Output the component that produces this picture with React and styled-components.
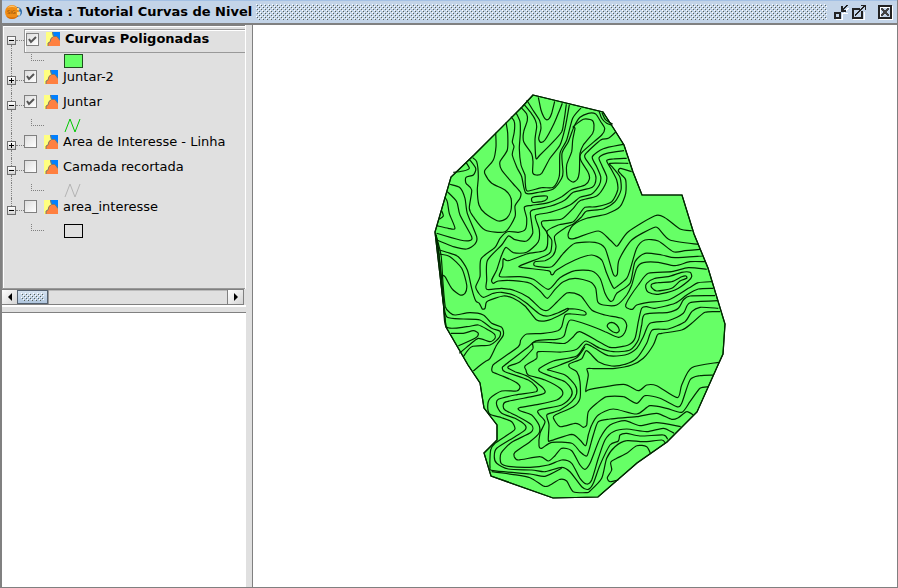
import React, { useState } from "react";
import styled, { createGlobalStyle } from "styled-components";

// Contours were digitised sheet by sheet, three units to a pixel.
// A letter in a line switches to the sheet with that origin.
const SHEETS = { N: [430, 90], D: [575, 215], E: [465, 355], F: [590, 355] };

const OUTLINE =
  "533,95 603,112 614,129 624,145 633,172 642,195 682,195 694,234 708,268 725,324 723,354 718,365 697,412 667,442 637,463 598,497 553,498 491,476 484,453 497,440 497,425 484,408 480,383 468,365 446,327 435,232 451,177 474,155 522,107";

const CONTOURS = [
  "N 325,22 333,60 341,80 349,89 358,85 365,70 374,34",
  "N 290,30 310,62 329,92 333,115 326,145 332,157 345,150 370,105 385,70 397,40",
  "N 282,43 304,70 316,90 320,110 315,150 318,205 330,195 370,155 395,125 400,105 409,43",
  "N 273,52 290,72 292,92 281,125 281,155 305,192 309,215 308,248 318,255 335,250 360,205 390,165 405,115 418,45",
  "N 258,68 270,95 271,130 268,175 273,225 285,255 286,280 292,303 335,293 370,292 388,258 390,190 410,150 428,85 453,54",
  "N 243,80 253,95 253,125 247,155 252,170 247,195 262,235 275,260 288,310 330,306 370,297 395,265 399,245 396,190 415,155 432,110 450,82 475,70 497,72 512,95 524,115 515,135 455,188 452,210 475,248 478,268 465,285 425,298 395,320 355,338 305,346 283,352 290,385 286,418 265,427 232,425 210,445 195,472 153,507 150,560 137,590 145,608 160,622 190,610 215,607 255,617 290,640 330,673 355,678 385,668 413,655 413,661 385,678 350,692 320,690 285,648 250,625 220,618 175,632 168,640 165,655 157,657 148,640 137,632 125,595 112,540 85,500 50,487 28,480",
  "N 558,125 535,145 512,150 470,188 465,203 490,240 498,265 487,292 430,307 405,330 360,349 310,359 301,367 305,400 308,430 290,453 255,449 235,438 215,465 172,512 170,570 170,598 215,595 255,602 295,622 335,658 355,660 380,637 410,609 435,610 455,620 485,660 525,675 575,685 590,705 583,730 565,742 525,725 475,705 422,690 410,710 402,738 380,748 320,752 290,775 225,825 E 112,38 120,50 190,75 213,95 213,110 150,120 100,133 95,150 110,175 150,190 180,210 180,225 150,245 95,280 88,305 95,325 130,342 200,345 240,350 290,337 315,350 350,395 370,403 385,385 F 30,330 60,270 85,258 90,240 110,235 150,243 220,240 233,253",
  "N 580,163 520,176 487,200 500,230 512,260 508,285 485,312 450,322 420,345 360,367 318,375 318,390 328,420 325,455 290,487 250,488 228,472 215,495 200,540 185,570 190,580 205,573 250,572 300,580 330,603 352,625 375,598 400,575 D 0,190 45,200 62,220 68,260 85,270 125,270 155,240 170,210 185,160 205,143 250,142 300,152 345,140 390,140",
  "N 582,182 530,190 507,203 515,225 530,260 525,285 500,318 450,332 430,355 395,387 338,393 337,408 352,430 352,468 340,483 290,492 235,512 220,506 218,530 208,555 215,561 270,560 310,568 355,598 390,563 D 0,167 50,168 75,190 90,235 105,258 115,255 125,235 165,205 180,140 210,115 260,120 300,128 383,123",
  "N 590,205 550,207 530,212 545,240 560,270 563,300 545,335 500,350 465,352 450,370 430,395 385,405 350,425 365,450 362,485 345,498 270,527 280,533 355,542 363,553 370,553 380,540 D 0,135 50,120 80,135 95,175 115,218 125,215 155,190 165,165 185,100 210,75 250,78 295,110 330,107 375,103",
  "N 595,220 540,220 548,232 570,262 573,300 555,335 520,357 470,363 455,380 430,402 408,412 374,438 378,470 370,495 345,512 315,515 315,528 365,530 400,490 D 0,85 60,82 90,100 115,178 127,178 132,135 170,75 235,38 250,40 285,75 370,88",
  "N 605,245 572,235 565,243 575,255 587,270 587,310 570,350 530,372 470,385 430,405 415,430 417,445 D 0,70 70,48 105,75 122,92 130,90 160,50 240,2 270,8 315,42 350,47",
  "D 395,163 340,158 290,170 220,175 190,210 165,245 152,270 155,278 172,283 185,270 220,262 280,255 340,220 370,203 410,200",
  "D 415,220 370,222 335,240 300,265 240,280 215,275 200,280 190,320 180,370 160,390 110,398 80,385 15,350 N 430,740 405,760 365,758 310,757 308,777 270,815 237,828 E 130,40 150,50 190,65 235,100 238,115 200,125 125,140 115,150 120,165 160,185 200,210 198,232 140,262 108,295 108,325 130,334 195,337 250,330 290,315 320,325 345,370 365,387 380,375 400,310 F 45,255 70,230 110,222 170,230 220,220 252,235",
  "D 420,242 345,243 325,255 310,280 280,292 210,298 200,330 190,375 165,405 115,410 75,400 32,378 N 440,778 395,786 325,785 320,805 285,828 E 183,45 190,60 240,75 285,100 293,118 275,135 220,148 163,158 165,167 200,180 222,210 222,235 195,260 150,292 148,305 160,315 225,305 250,318 270,302 290,280 320,287 345,330 360,343 375,325 F 30,250 60,210 105,197 150,212 200,203 272,215",
  "D 428,257 345,263 325,295 280,317 225,325 205,365 185,400 150,420 100,422 60,400 32,388 N 440,798 370,813 329,835 E 225,50 260,65 300,80 320,105 318,125 290,150 222,165 222,178 240,200 225,235 222,272 230,280 260,262 320,265 345,290 365,303 375,275 F 10,240 25,200 60,192 140,185 200,175 245,193 265,188 290,170 310,180",
  "N 465,770 440,803 390,825 355,838 E 252,46 300,60 330,90 335,115 320,140 285,165 247,178 247,190 252,210 250,255 258,257 320,238 345,255 362,272 370,240 F 5,210 25,180 70,162 140,177 180,152 230,160 275,172 300,140 330,100 355,95",
  "D 430,280 375,277 350,290 330,320 280,342 232,345 215,385 185,430 150,448 110,453 70,440 35,407 N 455,806 418,822 420,833 E 335,50 345,80 345,130 325,155 275,178 265,188 285,215 330,205 345,210 355,217 365,210 370,170 395,145 F 50,125 100,125 140,145 165,122 210,130 260,155 275,145 300,75 330,62 372,60",
  "D 435,290 390,292 350,325 320,345 260,355 247,360 235,390 205,430 170,450 120,460 60,461 36,461 E 370,60 362,108 F 0,103 100,88 145,107 170,90 200,92 262,128 275,90 305,38 387,22",
  "N 413,657 435,657 465,665 465,675 425,672 405,675 395,710 383,722 340,730 290,732 272,750 265,770 195,820 E 82,35 82,50 110,62 150,80 165,95 155,108 110,108 75,130 68,155 75,178 110,188 140,200 150,222 135,235 90,265 77,285 75,335 85,347 195,357 240,364 290,340",
  "E 80,350 140,358 195,368 235,393 250,393 285,373 305,378 325,410 365,413 F 0,408 35,370 50,310 75,275 110,257 160,260 215,255 225,263",
  "F 85,375 60,380 52,368 65,345 62,322 80,310 110,295 140,272 170,275 182,297",
  "N 197,128 198,170 190,210 165,240 165,252 185,280 225,300 243,325 243,360 230,385 205,393 165,370 147,345 142,300 145,260 140,215 128,203",
  "N 228,97 233,130 232,180 210,215 215,240 250,282 272,308 270,325 255,348 255,380 225,425 165,420 130,380 118,355 125,300 108,280 108,262 130,255 137,235 118,208",
  "N 108,217 118,235 100,243 70,247",
  "N 60,283 90,293 105,325 112,370 140,440 135,462 110,477 70,470 20,450",
  "N 52,305 80,335 90,375 125,440 118,452 90,450 20,430",
  "N 45,322 52,335 58,370 75,415 55,415 20,407",
  "N 35,362 40,378 28,388",
  "N 28,492 60,500 95,535 110,585 105,610 90,615 65,595 45,560 34,555",
  "N 18,435 33,495 39,580 46,650 60,668 75,675 120,668 160,675 185,700 215,712 220,735 200,765 180,805 165,815 145,830 130,843",
  "N 18,435 26,480 35,590 42,650 52,682 100,687 150,690 185,715 210,724 208,742 180,765 125,770 100,800",
  "N 17,430 30,520 40,620 48,710 110,710 145,705 175,720 193,732 195,745 180,755 145,745 118,765 88,790",
  "N 63,730 100,730 130,722 145,730 135,745 85,768",
  "N 508,65 515,85 530,100 545,105",
  "N 516,68 526,88 548,103",
];

const RINGS = [
  "N 430,110 460,88 485,90 492,105 488,130 460,165 450,190 448,245 442,268 428,276 412,262 410,225 425,185 428,150 435,115",
  "N 305,325 315,320 350,318 350,328 335,335 308,337",
  "N 533,703 545,697 560,705 568,720 562,728 548,725 533,712",
  "D 215,205 240,190 280,185 320,172 345,172 350,185 340,198 300,225 250,238 220,232 212,218",
  "D 230,208 250,203 290,200 320,185 333,183 335,190 315,198 290,220 245,228 230,218",
];

const readPoints = (line) => {
  let origin = [0, 0];
  const pts = [];
  line.split(" ").forEach((word) => {
    if (SHEETS[word]) {
      origin = SHEETS[word];
      return;
    }
    const [x, y] = word.split(",").map(Number);
    pts.push([origin[0] + x / 3, origin[1] + y / 3]);
  });
  return pts;
};

// Catmull-Rom spline through the points
const toPath = (line, closed) => {
  const p = readPoints(line);
  const n = p.length;
  const at = (i) =>
    closed ? p[(i + n) % n] : p[Math.max(0, Math.min(n - 1, i))];
  let d = `M${p[0].map((v) => v.toFixed(1))}`;
  for (let i = 0; i < (closed ? n : n - 1); i++) {
    const [a, b, c, e] = [at(i - 1), at(i), at(i + 1), at(i + 2)];
    const c1 = [0, 1].map((k) => (b[k] + (c[k] - a[k]) / 8).toFixed(1));
    const c2 = [0, 1].map((k) => (c[k] - (e[k] - b[k]) / 8).toFixed(1));
    d += `C${c1} ${c2} ${c.map((v) => v.toFixed(1))}`;
  }
  return d;
};

const LAYERS = [
  { name: "Curvas Poligonadas", on: true, open: true, symbol: "fill", active: true },
  { name: "Juntar-2", on: true, open: false },
  { name: "Juntar", on: true, open: true, symbol: "line", color: "#00c800" },
  { name: "Area de Interesse - Linha", on: false, open: false },
  { name: "Camada recortada", on: false, open: true, symbol: "line", color: "#b4b4b4" },
  { name: "area_interesse", on: false, open: true, symbol: "box" },
];

const Bumps = ({ id }) => (
  <BumpArea aria-hidden="true" shapeRendering="crispEdges">
    <defs>
      <pattern id={id} width="4" height="4" patternUnits="userSpaceOnUse">
        <path d="M0 0h1v1h-1zM2 2h1v1h-1z" fill="#fff" />
        <path d="M1 1h1v1h-1zM3 3h1v1h-1z" fill="#566058" />
      </pattern>
    </defs>
    <rect width="100%" height="100%" fill={`url(#${id})`} />
  </BumpArea>
);

const AppIcon = () => (
  <svg width="17" height="17" viewBox="0 0 17 17" aria-hidden="true">
    <circle cx="12" cy="8" r="5" fill="#2c6aa8" />
    <path d="M13 3l2 2-1 2 2 1-1 4-2 1z" fill="#8ab6dc" />
    <circle cx="7" cy="8" r="7" fill="#ef8d16" />
    <path d="M2 4q5-5 10 0q-5-2-10 0z" fill="#ffc267" />
    <path d="M1 12q6 3 12 0q-2 3-6 3t-6-3z" fill="#d46c08" />
    <path d="M12 4h2v2h-2zM12 8h3v3h-3z" fill="#fbd48b" />
    <text x="2" y="10" fontSize="5" fontFamily="DejaVu Sans" fill="#8a4a08">
      SIG
    </text>
  </svg>
);

const LayerIcon = () => (
  <svg width="14" height="14" viewBox="0 0 14 14" aria-hidden="true">
    <path d="M0 0h14v14h-14z" fill="#ffff80" />
    <path d="M6 0h8v9l-4-3-3-2z" fill="#0080ff" />
    <path d="M2 14v-3l2-1 1-4 2-1h4l3 4v5z" fill="#ff8040" />
    <path
      d="M6.500 0l1 4.500h3.500l3 4M7.500 4.500l-2.500 2-1 3.500-2 1v3"
      fill="none"
      stroke="#807868"
    />
  </svg>
);

const Symbol = ({ layer }) => {
  if (layer.symbol === "line") {
    return (
      <svg width="19" height="15" viewBox="0 0 19 15" aria-hidden="true">
        <path d="M1 14L6 1L11 14L16 1" fill="none" stroke={layer.color} />
      </svg>
    );
  }
  return <Swatch $filled={layer.symbol === "fill"} />;
};

const Layer = ({ layer, first, last }) => {
  const [on, setOn] = useState(layer.on);
  const [open, setOpen] = useState(layer.open);
  const hasSymbol = !!layer.symbol;
  return (
    <>
      <Row>
        <Gutter>
          <Trunk $hidden={first} />
          <Handle
            type="button"
            aria-label={`${open ? "Collapse" : "Expand"} ${layer.name}`}
            onClick={() => setOpen(!open)}
          >
            <svg width="7" height="7" viewBox="0 0 7 7" shapeRendering="crispEdges">
              <path d={open ? "M1 3h5v1h-5z" : "M1 3h5v1h-5zM3 1h1v5h-1z"} />
            </svg>
          </Handle>
          <Trunk $hidden={last} />
        </Gutter>
        <Branch />
        <LayerLabel $active={layer.active}>
          <Tick>
            <input
              type="checkbox"
              checked={on}
              onChange={(e) => setOn(e.target.checked)}
            />
            <svg width="9" height="9" viewBox="0 0 9 9" aria-hidden="true">
              <path d="M1 4L3 7L8 2" fill="none" stroke="#555" strokeWidth="2" />
            </svg>
          </Tick>
          <LayerIcon />
          <LayerName $active={layer.active}>{layer.name}</LayerName>
        </LayerLabel>
      </Row>
      {open && hasSymbol && (
        <SymbolRow>
          <Gutter>
            <Trunk $hidden={last} />
          </Gutter>
          <Elbow />
          <Symbol layer={layer} />
        </SymbolRow>
      )}
    </>
  );
};

export default function App() {
  return (
    <Frame>
      <GlobalStyle />
      <TitleBar>
        <AppIcon />
        <Title>Vista : Tutorial Curvas de Nivel</Title>
        <Grip>
          <Bumps id="grip" />
        </Grip>
        <WindowButton type="button" aria-label="Minimize">
          <svg width="15" height="15" viewBox="0 0 15 15" shapeRendering="crispEdges">
            <path d="M2 14.500h6.500v-7M14.500 3l-5 5.500h4" fill="none" stroke="#fff" />
            <path d="M0 7h7v7h-7zM2 9v3h3v-3z" fill="#222" fillRule="evenodd" />
            <path
              d="M7 1h2v2h1v-1h1v-1h1v-1h2v1h-1v1h-1v1h-1v1h-1v1h2v2h-5z"
              fill="#222"
            />
          </svg>
        </WindowButton>
        <WindowButton type="button" aria-label="Maximize">
          <svg width="15" height="15" viewBox="0 0 15 15" shapeRendering="crispEdges">
            <path d="M1 14.500h11v-8" fill="none" stroke="#fff" />
            <path d="M0 3h8v2h-6v7h7v-6h2v8h-11z" fill="#222" />
            <path
              d="M9 0h5v5h-1v-3h-1v1h-1v1h-1v1h-1v1h-1v1h-1v1h-1v1h-1v1h-1v1h-1v-2h1v-1h1v-1h1v-1h1v-1h1v-1h1v-1h1v-1h1v-1h-2z"
              fill="#222"
            />
          </svg>
        </WindowButton>
        <CloseButton type="button" aria-label="Close">
          <svg width="15" height="15" viewBox="0 0 15 15" shapeRendering="crispEdges">
            <path d="M1 14.500h13.500v-13.500M2.500 12v-9.500h10" fill="none" stroke="#fff" />
            <path d="M0 0h14v14h-14zM2 2v10h10v-10z" fill="#222" fillRule="evenodd" />
            <path
              d="M3 3h2v1h1v1h2v-1h1v-1h2v2h-1v1h-1v2h1v1h1v2h-2v-1h-1v-1h-2v1h-1v1h-2v-2h1v-1h1v-2h-1v-1h-1z"
              fill="#444"
            />
          </svg>
        </CloseButton>
      </TitleBar>
      <Panes>
        <SideBar>
          <LayerTree>
            {LAYERS.map((layer, i) => (
              <Layer
                key={layer.name}
                layer={layer}
                first={i === 0}
                last={i === LAYERS.length - 1}
              />
            ))}
          </LayerTree>
          <ScrollBar>
            <ArrowButton type="button" aria-label="Scroll left">
              <svg width="4" height="8" viewBox="0 0 4 8">
                <path d="M4 0v8L0 4z" />
              </svg>
            </ArrowButton>
            <Thumb>
              <Bumps id="thumb" />
            </Thumb>
            <Track />
            <ArrowButton type="button" aria-label="Scroll right">
              <svg width="4" height="8" viewBox="0 0 4 8">
                <path d="M0 0v8L4 4z" />
              </svg>
            </ArrowButton>
          </ScrollBar>
          <Splitter />
          <Locator />
        </SideBar>
        <Divider />
        <MapView>
          <Map viewBox="253 25 644 562" role="img" aria-label="Curvas de nivel">
            <polygon points={OUTLINE} fill="#66ff66" />
            {CONTOURS.map((c) => (
              <path key={c} d={toPath(c, false)} />
            ))}
            {RINGS.map((c) => (
              <path key={c} d={toPath(c, true)} />
            ))}
            <polygon points={OUTLINE} />
          </Map>
        </MapView>
      </Panes>
    </Frame>
  );
}

const GlobalStyle = createGlobalStyle`
  body {
    margin: 0;
  }
  * {
    box-sizing: border-box;
  }
  svg {
    display: block;
    flex: none;
  }
`;

const Frame = styled.div`
  display: flex;
  flex-direction: column;
  min-height: 100vh;
  background: #e0e0e0;
  border-left: 2px solid #808080;
  border-right: 1px solid #808080;
  border-bottom: 1px solid #808080;
  font-family: "DejaVu Sans", sans-serif;
  font-size: 13px;
  color: #000;
`;
const TitleBar = styled.header`
  display: flex;
  align-items: center;
  height: 25px;
  padding: 0 4px 0 3px;
  background: #c3d4e8;
  border-top: 1px solid #a3c0e4;
  border-bottom: 2px solid #808080;
`;
const Title = styled.h1`
  margin: 0 4px;
  font-size: 13px;
  line-height: 16px;
  font-weight: bold;
  white-space: nowrap;
`;
const Grip = styled.div`
  flex: 1;
  height: 16px;
  margin-right: 7px;
`;
const BumpArea = styled.svg`
  width: 100%;
  height: 100%;
`;
const WindowButton = styled.button`
  padding: 0;
  margin-right: 3px;
  border: none;
  background: none;
`;
const CloseButton = styled(WindowButton)`
  margin: 0 0 0 8px;
`;
const Panes = styled.main`
  flex: 1;
  display: grid;
  grid-template-columns: 244px 6px 1fr;
`;
const SideBar = styled.aside`
  display: flex;
  flex-direction: column;
  min-width: 0;
`;
const LayerTree = styled.div`
  height: 264px;
  padding-top: 2px;
  margin-right: 1px;
  border-top: 1px solid #808080;
  border-left: 1px solid #999;
  border-bottom: 1px solid #999;
  box-shadow: inset 1px 1px #fff, 1px 0 #fff;
`;
const Row = styled.div`
  display: flex;
  align-items: center;
  height: 25px;
  padding-left: 4px;
`;
const SymbolRow = styled(Row)`
  height: 15px;
`;
const Gutter = styled.div`
  display: flex;
  flex-direction: column;
  align-items: center;
  align-self: stretch;
  width: 9px;
`;
const Trunk = styled.div`
  flex: 1;
  border-left: 1px dotted #808080;
  visibility: ${(props) => (props.$hidden ? "hidden" : "visible")};
`;
const Handle = styled.button`
  width: 9px;
  height: 9px;
  padding: 0;
  border: 1px solid #707070;
  background: linear-gradient(#fff, #d0d0d0);
`;
const Branch = styled.div`
  width: 8px;
  border-top: 1px dotted #808080;
`;
const Elbow = styled.div`
  align-self: flex-start;
  width: 13px;
  height: 7px;
  margin: 1px 20px 0 15px;
  border-left: 1px dotted #808080;
  border-bottom: 1px dotted #808080;
`;
const LayerLabel = styled.label`
  display: flex;
  align-items: center;
  flex: 1;
  height: ${(props) => (props.$active ? "24px" : "25px")};
  padding: ${(props) => (props.$active ? "0 0 3px 1px" : "0 0 8px 0")};
  border: ${(props) => (props.$active ? "1px solid #999" : "none")};
  border-right: none;
  box-shadow: ${(props) => (props.$active ? "inset 1px 1px #fff" : "none")};
`;
const LayerName = styled.span`
  margin-left: 5px;
  font-weight: ${(props) => (props.$active ? "bold" : "normal")};
  line-height: 16px;
  white-space: nowrap;
`;
const Tick = styled.span`
  display: grid;
  place-items: center;
  margin-right: 7px;
  input {
    grid-area: 1 / 1;
    appearance: none;
    width: 13px;
    height: 13px;
    margin: 0;
    border: 1px solid #808080;
    background: linear-gradient(135deg, #ddd, #fff);
  }
  svg {
    grid-area: 1 / 1;
    visibility: hidden;
    pointer-events: none;
  }
  input:checked + svg {
    visibility: visible;
  }
`;
const Swatch = styled.span`
  width: 19px;
  height: 14px;
  border: 1px solid ${(props) => (props.$filled ? "#1f4d1f" : "#000")};
  background: ${(props) => (props.$filled ? "#66ff66" : "transparent")};
`;
const ScrollBar = styled.div`
  display: flex;
  height: 16px;
  margin-right: 2px;
  border: 1px solid #808080;
  border-left: none;
`;
const ArrowButton = styled.button`
  display: grid;
  place-items: center;
  width: 15px;
  padding: 0;
  border: none;
  background: linear-gradient(135deg, #fff, #d4d4d4);
`;
const Thumb = styled.div`
  width: 31px;
  padding: 2px 3px;
  border: 1px solid #566270;
  background: linear-gradient(#d5e2f0, #b0c6de);
`;
const Track = styled.div`
  flex: 1;
  border-right: 1px solid #808080;
  border-left: 1px solid #999;
  box-shadow: inset 0 1px #bbb;
`;
const Splitter = styled.div`
  height: 8px;
  border-top: 2px solid #fff;
  border-bottom: 1px solid #808080;
`;
const Locator = styled.div`
  flex: 1;
  background: #fff;
`;
const Divider = styled.div`
  background: #e0e0e0;
`;
const MapView = styled.section`
  display: grid;
  background: #fff;
  border-left: 1px solid #808080;
  min-height: 0;
`;
const Map = styled.svg`
  width: 100%;
  height: 100%;
  fill: none;
  stroke: #002800;
  stroke-width: 1.2px;
`;
